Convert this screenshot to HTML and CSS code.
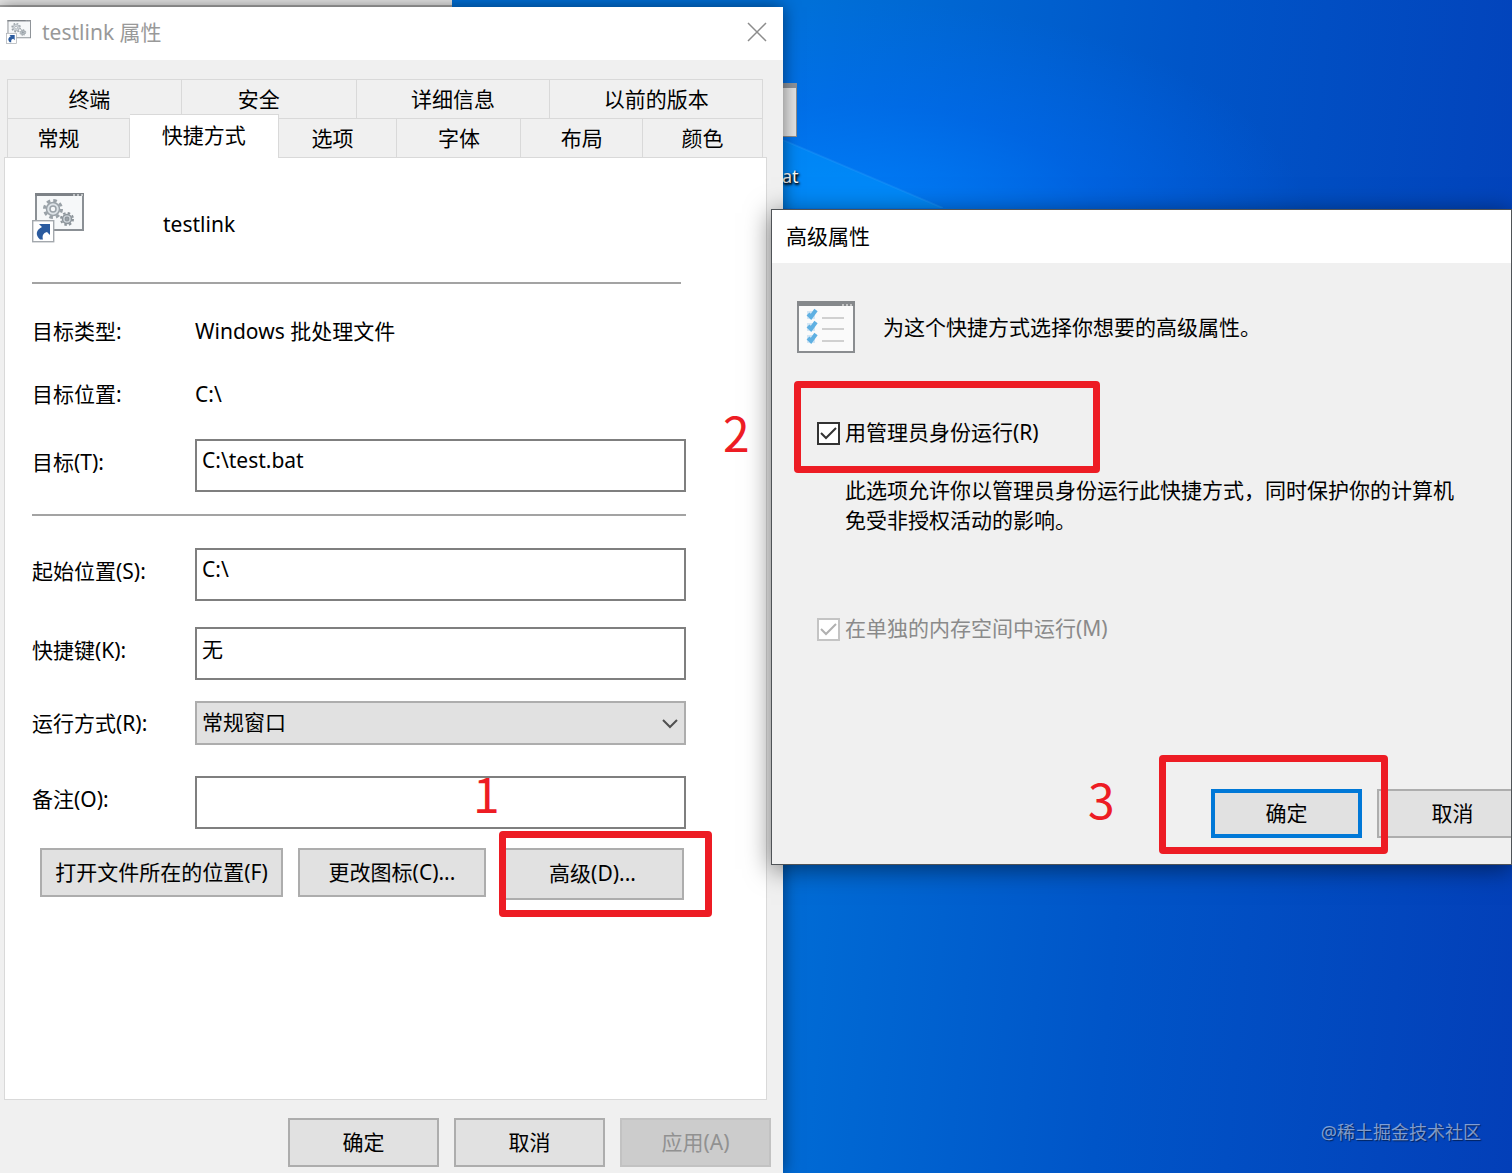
FILE: index.html
```html
<!DOCTYPE html>
<html lang="zh-CN">

<head>
  <meta charset="UTF-8">
  <meta name="viewport" content="width=device-width, initial-scale=1.0">
  <title>testlink 属性</title>
  <link rel="stylesheet" href="styles.css">
</head>

<body>

  <div class="desktop">
    <svg class="light-ray" viewBox="0 0 160 68" aria-hidden="true">
      <path d="M0 0 L160 68 H0 Z" fill="#00a0ff" fill-opacity="0.4" />
      <path d="M0 0 L160 68" stroke="#46b0ff" stroke-opacity="0.2" stroke-width="2" />
    </svg>

    <!-- Desktop shortcut, mostly behind the window -->
    <div class="desktop-icon">
      <div class="desktop-icon-file"></div>
      <span>at</span>
    </div>

    <div class="window-behind"></div>

    <!-- Shortcut properties -->
    <div class="window properties">
      <div class="title-bar">
        <svg class="title-icon" viewBox="0 0 54 50" aria-hidden="true">
          <use href="#shortcutIcon" />
        </svg>
        <span class="title">testlink 属性</span>
        <button class="close-btn" aria-label="关闭">
          <svg width="20" height="20" viewBox="0 0 20 20">
            <path d="M1 1 L19 19 M19 1 L1 19" stroke="#8c8c8c" stroke-width="1.5" fill="none" />
          </svg>
        </button>
      </div>

      <div class="tabs" role="tablist">
        <div class="tab-row tab-row-top">
          <button class="tab" role="tab">终端</button>
          <button class="tab" role="tab">安全</button>
          <button class="tab" role="tab">详细信息</button>
          <button class="tab" role="tab">以前的版本</button>
        </div>
        <div class="tab-row tab-row-bottom">
          <button class="tab" role="tab">常规</button>
          <button class="tab active" role="tab" aria-selected="true">快捷方式</button>
          <button class="tab" role="tab">选项</button>
          <button class="tab" role="tab">字体</button>
          <button class="tab" role="tab">布局</button>
          <button class="tab" role="tab">颜色</button>
        </div>
      </div>

      <div class="panel">
        <div class="panel-header">
          <svg width="54" height="50" viewBox="0 0 54 50" aria-hidden="true">
            <g id="shortcutIcon">
              <rect x="4" y="1" width="47" height="36" fill="#f6f8f9" stroke="#8b9095" stroke-width="2" />
              <rect x="3" y="0" width="49" height="3" fill="#7d8287" />
              <path d="M41 2 h2 M45 2 h2 M49 2 h2" stroke="#d8dadc" stroke-width="1.5" />
              <circle cx="21" cy="16" r="8.5" fill="none" stroke="#9aa2a8" stroke-width="3" stroke-dasharray="3.6 3.08" />
              <circle cx="21" cy="16" r="6.5" fill="#dde3e7" stroke="#9aa2a8" stroke-width="1.5" />
              <circle cx="21" cy="16" r="3" fill="#f6f8f9" stroke="#9aa2a8" stroke-width="1.5" />
              <circle cx="35" cy="26" r="6" fill="none" stroke="#8d959b" stroke-width="2" stroke-dasharray="2.5 2.21" />
              <circle cx="35" cy="26" r="4.5" fill="#ccd3d8" stroke="#8d959b" stroke-width="1.5" />
              <circle cx="35" cy="26" r="1.8" fill="#9aa2a8" stroke="#8d959b" stroke-width="1.2" />
              <rect x="0.7" y="27.7" width="21" height="21" fill="#fff" stroke="#a3a8ad" stroke-width="1.4" />
              <path d="M7 31 H18 V42 L15 39 C11 40 10 43 11 46.500 H8 C3 42 4 37 10 34 Z" fill="#2b5b9f" />
            </g>
          </svg>
          <span class="shortcut-name">testlink</span>
        </div>

        <hr class="first-line">

        <div class="row info-row">
          <span>目标类型:</span>
          <span>Windows 批处理文件</span>
        </div>
        <div class="row info-row">
          <span>目标位置:</span>
          <span>C:\</span>
        </div>
        <div class="row">
          <label for="target">目标(T):</label>
          <input type="text" id="target" value="C:\test.bat">
        </div>

        <hr class="second-line">

        <div class="row">
          <label for="startIn">起始位置(S):</label>
          <input type="text" id="startIn" value="C:\">
        </div>
        <div class="row">
          <label for="hotkey">快捷键(K):</label>
          <input type="text" id="hotkey" value="无">
        </div>
        <div class="row select-row">
          <label for="runMode">运行方式(R):</label>
          <div class="select-box">
            <select id="runMode">
              <option>常规窗口</option>
            </select>
            <svg class="arrow" width="16" height="10" viewBox="0 0 16 10" aria-hidden="true">
              <path d="M1 1 L8 8 L15 1" fill="none" stroke="#505050" stroke-width="2" />
            </svg>
          </div>
        </div>
        <div class="row">
          <label for="comment">备注(O):</label>
          <input type="text" id="comment">
        </div>

        <div class="panel-buttons">
          <button class="btn btn-location">打开文件所在的位置(F)</button>
          <button class="btn btn-icon">更改图标(C)...</button>
          <button class="btn btn-advanced">高级(D)...</button>
        </div>
      </div>

      <div class="window-footer">
        <button class="btn">确定</button>
        <button class="btn">取消</button>
        <button class="btn" disabled>应用(A)</button>
      </div>
    </div>

    <!-- Advanced properties -->
    <div class="window advanced">
      <div class="title-bar">
        <span class="title">高级属性</span>
      </div>
      <div class="advanced-body">
        <div class="advanced-header">
          <svg width="58" height="52" viewBox="0 0 58 52" aria-hidden="true">
            <rect x="1" y="1" width="56" height="50" fill="#fafafa" stroke="#8a8d90" stroke-width="2" />
            <rect x="0" y="0" width="58" height="5" fill="#85888b" />
            <path d="M45 4 h2 M49 4 h2 M53 4 h2" stroke="#d8d8d8" stroke-width="1.5" />
            <path d="M10 10 h8 v8 h-8 Z M10 22 h8 v8 h-8 Z M10 34 h8 v8 h-8 Z" fill="#d3e6f5" />
            <path d="M11 13 L14 16 L19 9 M11 25 L14 28 L19 21 M11 37 L14 40 L19 33" fill="none" stroke="#5fb0e2" stroke-width="4" />
            <path d="M25 17 H47 M25 28 H47 M25 40 H47" stroke="#d0d0d0" stroke-width="2" />
          </svg>
          <p>为这个快捷方式选择你想要的高级属性。</p>
        </div>

        <div class="check-row">
          <input type="checkbox" id="runAsAdmin" checked>
          <label for="runAsAdmin">用管理员身份运行(R)</label>
        </div>
        <p class="description">此选项允许你以管理员身份运行此快捷方式，同时保护你的计算机<br>免受非授权活动的影响。</p>

        <div class="check-row memory-row">
          <input type="checkbox" id="separateMemory" checked disabled>
          <label for="separateMemory">在单独的内存空间中运行(M)</label>
        </div>

        <div class="advanced-buttons">
          <button class="btn btn-default">确定</button>
          <button class="btn">取消</button>
        </div>
      </div>
    </div>

    <!-- Step marks -->
    <div class="mark mark-advanced"></div>
    <div class="mark mark-admin"></div>
    <div class="mark mark-ok"></div>
    <span class="step step-one">1</span>
    <span class="step step-two">2</span>
    <span class="step step-three">3</span>

    <span class="watermark">@稀土掘金技术社区</span>
  </div>

</body>

</html>
```

FILE: styles.css
```css
* {
  margin: 0;
  padding: 0;
  box-sizing: border-box;
}

body,
button,
input,
select {
  font-family: "Noto Sans", "Noto Sans CJK SC", sans-serif;
  font-size: 21px;
  line-height: 30px;
  color: #000;
}

.desktop {
  position: relative;
  min-height: 100vh;
  overflow: hidden;
  background:
    radial-gradient(ellipse 460px 230px at 850px 230px, rgba(0, 130, 255, 0.9), rgba(0, 110, 255, 0.4) 55%, rgba(0, 100, 255, 0)),
    linear-gradient(95deg, #0070d8 50%, #0055c8 74%, #033fb8 100%);
}

.light-ray {
  position: absolute;
  left: 783px;
  top: 140px;
  width: 160px;
  height: 68px;
}

.desktop-icon {
  position: absolute;
  left: 782px;
  top: 83px;
  font-size: 18px;
  color: #fff;
  text-shadow: 1px 1px 2px #000, 1px 2px 3px #000;
}

.desktop-icon-file {
  width: 15px;
  height: 54px;
  margin-bottom: 24px;
  background-color: #e4e4e4;
  border: 1px solid #8d8d8d;
  border-top: 5px solid #8f949c;
}

.window-behind {
  position: absolute;
  left: 0;
  top: 0;
  width: 452px;
  height: 7px;
  background-color: #e8e8e8;
  border-bottom: 2px solid #adadad;
}

/* Windows */
.window {
  position: absolute;
  display: flex;
  flex-direction: column;
  background-color: #f0f0f0;
}

.properties {
  left: 0;
  top: 7px;
  bottom: 0;
  width: 783px;
  box-shadow: 0 0 16px rgba(0, 0, 0, 0.5);
}

.advanced {
  left: 771px;
  top: 209px;
  right: 0;
  height: 656px;
  overflow: hidden;
  border: 1px solid #4f5357;
  box-shadow: 0 4px 24px rgba(0, 0, 0, 0.5);
}

.title-bar {
  display: flex;
  align-items: center;
  height: 53px;
  flex-shrink: 0;
  padding: 0 14px 2px;
  background-color: #fff;
}

.properties .title-bar {
  padding: 0 16px 3px 6px;
}

.title-icon {
  width: 26px;
  height: 24px;
  margin-right: 10px;
}

.properties .title {
  flex-grow: 1;
  color: #999;
}

.close-btn {
  display: flex;
  border: none;
  background: none;
}

/* Tabs */
.tabs {
  padding: 19px 20px 0 7px;
}

.tab-row {
  display: grid;
  height: 39px;
  border-left: 1px solid #d9d9d9;
}

.tab-row-top {
  grid-template-columns: 174fr 175fr 194fr 213fr;
}

.tab-row-bottom {
  grid-template-columns: 122fr 149fr 119fr 124fr 122fr 120fr;
}

.tab {
  background-color: #f0f0f0;
  border: none;
  border-top: 1px solid #d9d9d9;
  border-right: 1px solid #d9d9d9;
}

.tab.active {
  z-index: 1;
  margin-top: -4px;
  margin-bottom: -1px;
  padding-bottom: 4px;
  background-color: #fff;
}

.tab:first-child,
.tab-row-top .tab:nth-child(2) {
  padding-right: 20px;
}

.tab-row-top .tab:first-child {
  padding-right: 10px;
}

.tab-row-bottom .tab:nth-child(3) {
  padding-right: 10px;
}

/* Shortcut page */
.panel {
  flex-grow: 1;
  margin: 0 16px 0 4px;
  padding: 35px 80px 0 27px;
  background-color: #fff;
  border: 1px solid #d9d9d9;
}

.panel-header {
  display: flex;
  align-items: center;
  margin-bottom: 39px;
}

.shortcut-name {
  margin-left: 77px;
  padding-top: 12px;
}

hr {
  height: 2px;
  border: none;
  background-color: #a3a3a3;
}

.first-line {
  margin-right: 5px;
}

.row {
  display: grid;
  grid-template-columns: 163px 1fr;
  align-items: center;
  margin-top: 26px;
}

.info-row {
  height: 32px;
  margin-top: 31px;
}

.info-row + .row:not(.info-row) {
  margin-top: 29px;
}

.second-line {
  margin-top: 22px;
}

.second-line + .row {
  margin-top: 32px;
}

.row.select-row {
  margin-top: 21px;
}

.select-row + .row {
  margin-top: 31px;
}

.row label {
  padding-bottom: 8px;
}

.select-row label {
  padding-bottom: 0;
}

.row input {
  width: 100%;
  height: 53px;
  padding: 0 5px 12px;
  background-color: #fff;
  border: 2px solid #7f7f7f;
}

.select-box {
  position: relative;
}

.select-box select {
  display: block;
  width: 100%;
  height: 44px;
  padding: 0 5px 2px;
  appearance: none;
  background-color: #e1e1e1;
  border: 2px solid #adadad;
  border-radius: 0;
}

.arrow {
  position: absolute;
  right: 8px;
  top: 18px;
  pointer-events: none;
}

.panel-buttons {
  display: flex;
  align-items: flex-start;
  gap: 15px;
  margin-top: 19px;
  padding-left: 8px;
}

/* Buttons */
.btn {
  width: 151px;
  height: 49px;
  flex-shrink: 0;
  padding-bottom: 2px;
  background-color: #e1e1e1;
  border: 2px solid #adadad;
  white-space: nowrap;
}

.btn:disabled {
  color: #919191;
  background-color: #cccccc;
  border-color: #c2c2c2;
}

.btn-location {
  width: 243px;
}

.btn-icon {
  width: 188px;
}

.btn-advanced {
  width: 183px;
  height: 52px;
}

.btn-default {
  border: 4px solid #0078d7;
}

.window-footer {
  display: flex;
  justify-content: flex-end;
  gap: 15px;
  padding: 18px 12px 6px;
}

/* Advanced properties */
.advanced-body {
  display: flex;
  flex-direction: column;
  flex-grow: 1;
  padding: 38px 0 26px 25px;
  white-space: nowrap;
}

.advanced-header {
  display: flex;
  align-items: center;
  gap: 28px;
}

.check-row {
  display: flex;
  align-items: center;
  gap: 5px;
  margin-top: 64px;
  padding-left: 20px;
}

.check-row label {
  padding-bottom: 2px;
}

.memory-row {
  margin-top: 78px;
  color: #8a8a8a;
}

.check-row input {
  width: 23px;
  height: 23px;
  appearance: none;
  border: 2px solid #333;
  background: #fff url("data:image/svg+xml,%3Csvg xmlns='http://www.w3.org/2000/svg' viewBox='0 0 19 19'%3E%3Cpath d='M2 9 L7 14 L17 4' fill='none' stroke='%23333' stroke-width='2'/%3E%3C/svg%3E");
}

.check-row input:disabled {
  border-color: #c4c4c4;
  background-image: url("data:image/svg+xml,%3Csvg xmlns='http://www.w3.org/2000/svg' viewBox='0 0 19 19'%3E%3Cpath d='M2 9 L7 14 L17 4' fill='none' stroke='%23b0b0b0' stroke-width='2'/%3E%3C/svg%3E");
}

.description {
  margin-top: 26px;
  padding-left: 48px;
}

.advanced-buttons {
  display: flex;
  justify-content: flex-end;
  gap: 15px;
  margin-top: auto;
  margin-right: -17px;
}

/* Step marks */
.mark {
  position: absolute;
  border: 7px solid #ed1c24;
  border-radius: 4px;
}

.mark-advanced {
  left: 499px;
  top: 831px;
  width: 213px;
  height: 86px;
}

.mark-admin {
  left: 794px;
  top: 381px;
  width: 306px;
  height: 92px;
}

.mark-ok {
  left: 1159px;
  top: 755px;
  width: 229px;
  height: 99px;
}

.step {
  position: absolute;
  font-family: "Noto Sans CJK SC", sans-serif;
  font-size: 48px;
  line-height: 48px;
  color: #ed1c24;
}

.step-one {
  left: 473px;
  top: 768px;
}

.step-two {
  left: 723px;
  top: 407px;
}

.step-three {
  left: 1088px;
  top: 774px;
}

.watermark {
  position: absolute;
  right: 31px;
  bottom: 26px;
  font-size: 18px;
  color: rgba(255, 255, 255, 0.5);
  text-shadow: 1px 1px 1px rgba(0, 0, 0, 0.5);
}
```
